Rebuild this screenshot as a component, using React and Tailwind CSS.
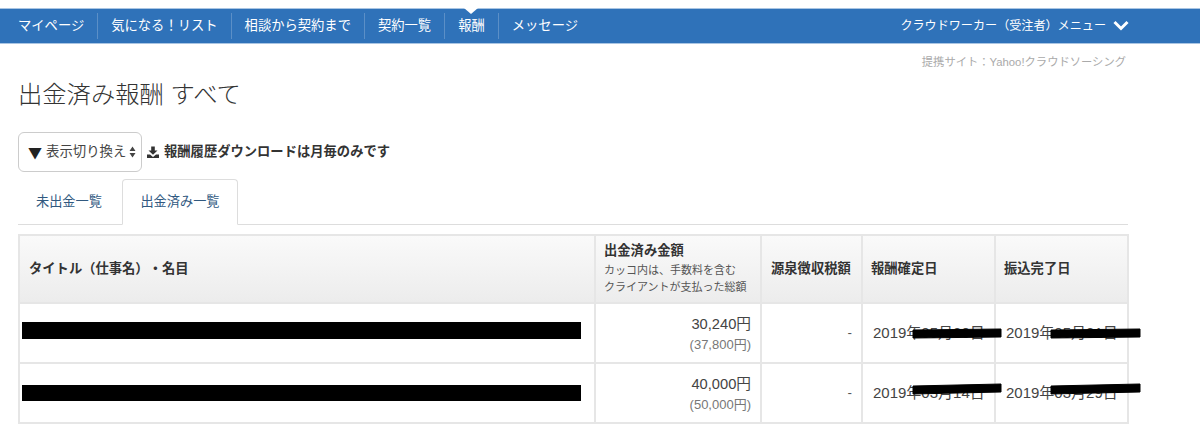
const navItems = ["マイページ", "気になる！リスト", "相談から契約まで", "契約一覧", "報酬", "メッセージ"];

const rows = [
  { amount: "30,240円", gross: "(37,800円)", fixed: "2019年05月30日", paid: "2019年05月31日" },
  { amount: "40,000円", gross: "(50,000円)", fixed: "2019年03月14日", paid: "2019年03月29日" },
];

const App = () => {
  return (
    <div className="w-[1200px] h-[428px] overflow-hidden bg-white pt-2 text-[#333] [text-spacing-trim:space-all] font-['Liberation_Sans','Noto_Sans_CJK_JP',sans-serif]">
      <nav className="relative flex h-[36px] items-center justify-between border-t border-t-[#a9c5e3] border-b border-b-[#a9c5e3] bg-[#2f72b9] pl-[5px] pr-[71px] text-white">
        <ul className="flex items-center">
          {navItems.map((item, i) => (
            <li
              key={item}
              className={`relative flex h-[26px] items-center px-[13px] text-[13.3px] ${
                i < navItems.length - 1 ? "border-r border-r-[#5b8fc7]" : ""
              }`}
            >
              {item}
              {item === "報酬" && (
                <span className="absolute left-[19px] top-[-5px] h-0 w-0 border-x-[7px] border-t-[6px] border-x-transparent border-t-white" />
              )}
            </li>
          ))}
        </ul>
        <div className="flex items-center gap-[7px] text-[12.1px]">
          <span>クラウドワーカー（受注者）メニュー</span>
          <svg width="16" height="11" viewBox="0 0 16 11" fill="none">
            <path d="M1.5 2 L8 8.5 L14.5 2" stroke="white" strokeWidth="3" />
          </svg>
        </div>
      </nav>

      <div className="w-[1128px] pl-[18px]">
        <p className="mt-[11px] text-right text-[11.3px] leading-[14px] pr-[2px] text-[#aaa]">提携サイト：Yahoo!クラウドソーシング</p>
        <h1 className="mt-[9px] text-[24.3px] leading-[34px] font-light text-[#333]">出金済み報酬 すべて</h1>

        <div className="mt-[20px] flex items-center">
          <div className="flex h-[40px] w-[124px] items-center rounded-[6px] border border-[#ccc] pl-[9px] text-[13.4px] text-[#444]">
            <span className="mr-[4px] font-['Noto_Sans_CJK_JP'] text-[14px] text-[#222]">▼</span>
            <span>表示切り換え</span>
            <svg className="ml-[3px]" width="7" height="12" viewBox="0 0 7 12" fill="#444">
              <path d="M3.5 0.5 L6.5 5 H0.5 Z M0.5 7 H6.5 L3.5 11.5 Z" />
            </svg>
          </div>
          <svg className="ml-[5px]" width="12" height="12" viewBox="0 0 12 12" fill="#333">
            <path d="M4.2 0.5 H7.8 V4.5 H10.5 L6 8.8 L1.5 4.5 H4.2 Z M0 8.5 H3 L6 11 L9 8.5 H12 V12 H0 Z" />
          </svg>
          <span className="ml-[5px] text-[13.3px] font-bold text-[#333]">報酬履歴ダウンロードは月毎のみです</span>
        </div>

        <div className="mt-[7px] flex h-[46px] items-end border-b border-[#ddd] text-[13.2px] text-[#31597f]">
          <div className="flex h-[45px] w-[104px] items-center pl-[18px]">未出金一覧</div>
          <div className="-mb-px flex h-[46px] w-[116px] items-center justify-center rounded-t-[4px] border border-[#ddd] border-b-white bg-white">出金済み一覧</div>
        </div>

        <div className="relative mt-[9px]">
          <table className="w-[1109px] table-fixed border-collapse text-[13.3px]">
            <colgroup>
              <col className="w-[576px]" />
              <col className="w-[166px]" />
              <col className="w-[101px]" />
              <col className="w-[133px]" />
              <col className="w-[133px]" />
            </colgroup>
            <thead>
              <tr className="h-[68px] bg-gradient-to-b from-[#fafafa] to-[#ececec] text-left font-bold">
                <th className="border-2 border-[#e6e6e6] pl-[9px]">タイトル（仕事名）・名目</th>
                <th className="border-2 border-[#e6e6e6] pl-[8px]">
                  <div className="text-[13.3px] leading-[18px]">出金済み金額</div>
                  <div className="mt-[2px] text-[11px] leading-[17px] font-normal text-[#555]">
                    カッコ内は、手数料を含む
                    <br />
                    クライアントが支払った総額
                  </div>
                </th>
                <th className="border-2 border-[#e6e6e6] pl-[9px]">源泉徴収税額</th>
                <th className="border-2 border-[#e6e6e6] pl-[8px]">報酬確定日</th>
                <th className="border-2 border-[#e6e6e6] pl-[8px]">振込完了日</th>
              </tr>
            </thead>
            <tbody>
              {rows.map((row) => (
                <tr key={row.amount} className="h-[60px] text-[#444]">
                  <td className="border-2 border-[#e6e6e6]" />
                  <td className="border-2 border-[#e6e6e6] pr-[9px] text-right">
                    <div className="pt-[2px] text-[14.7px] leading-[22px]">{row.amount}</div>
                    <div className="text-[13px] leading-[20px] text-[#777]">{row.gross}</div>
                  </td>
                  <td className="border-2 border-[#e6e6e6] pr-[9px] text-right text-[#555]">-</td>
                  <td className="border-2 border-[#e6e6e6] pl-[10px] text-[15px]">{row.fixed}</td>
                  <td className="border-2 border-[#e6e6e6] pl-[10px] text-[15px]">{row.paid}</td>
                </tr>
              ))}
            </tbody>
          </table>

          {/* 黒塗り部分 */}
          <svg className="absolute left-0 top-0" width="1130" height="190" viewBox="0 0 1130 190" fill="black">
            <rect x="4" y="88" width="559" height="17" />
            <rect x="4" y="151" width="559" height="16" />
            <path d="M895 96 L983 95 V103 L895 104 Z" stroke="black" />
            <path d="M1033 96 L1122 95 V103 L1033 104 Z" stroke="black" />
            <path d="M895 152 L983 150 V158 L895 160 Z" stroke="black" />
            <path d="M1033 152 L1122 150 V158 L1033 160 Z" stroke="black" />
          </svg>
        </div>
      </div>
    </div>
  );
};

export default App;
